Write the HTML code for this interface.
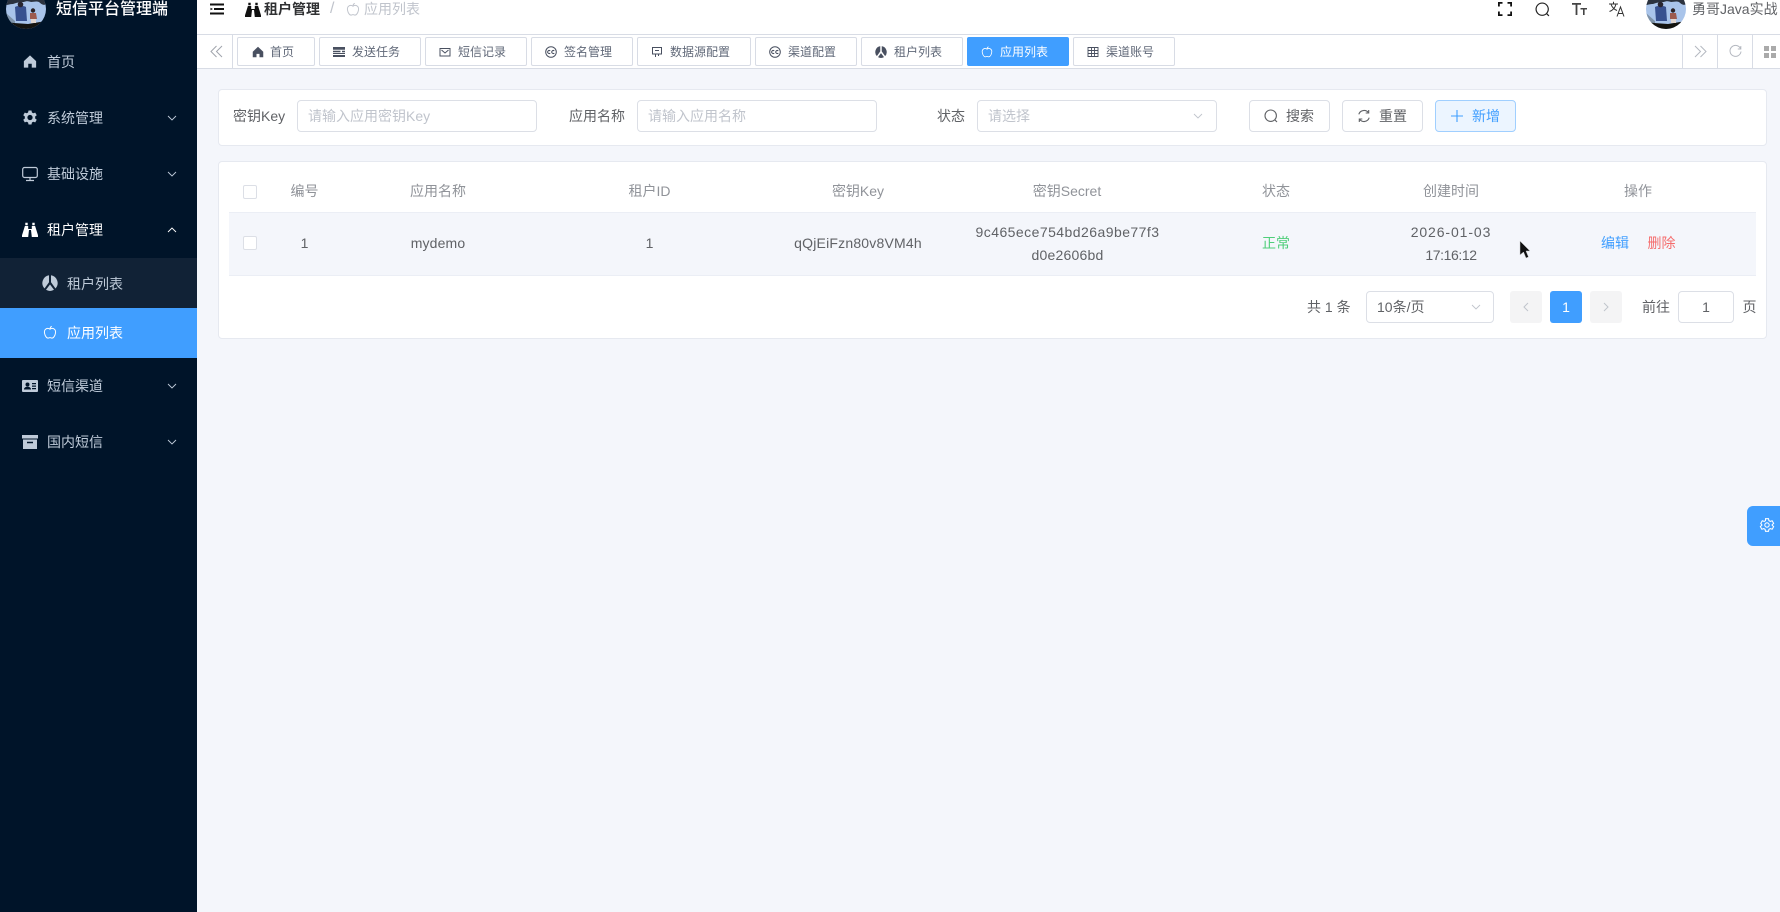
<!DOCTYPE html>
<html lang="zh-CN">
<head>
<meta charset="utf-8">
<title>短信平台管理端</title>
<style>
*{box-sizing:border-box;margin:0;padding:0}
html,body{width:1780px;height:912px;overflow:hidden;background:#f4f6fb}
body{position:relative;font-family:"Liberation Sans","Noto Sans CJK SC",sans-serif;font-size:14px;color:#606266}
.a{position:absolute}
.t{position:absolute;white-space:nowrap;line-height:20px;height:20px}
.c{transform:translateX(-50%)}
svg{display:block;overflow:visible}
svg.a{position:absolute}
#side{left:0;top:0;width:197px;height:912px;background:#001429;overflow:hidden}
#side .t{color:#bfcbd9}
.sub{left:0;width:197px;height:50px}
#top{left:197px;top:0;width:1583px;height:35px;background:#fff;border-bottom:1px solid #d8dce5}
#tabs{left:197px;top:35px;width:1583px;height:34px;background:#fff;border-bottom:1px solid #d8dce5}
.vl{position:absolute;top:35px;width:1px;height:33px;background:#d8dce5}
.tab{position:absolute;top:37px;height:29px;background:#fff;border:1px solid #d8dce5;border-radius:2px;font-size:12px;color:#606878;line-height:29px;white-space:nowrap}
.tab svg{position:absolute;left:13px;top:8px;width:12px;height:12px}
.tab span{position:absolute;left:32px;top:0}
.tab.on{background:#409eff;border-color:#409eff;color:#fff}
.card{position:absolute;background:#fff;border:1px solid #e6e9f0;border-radius:4px}
.ipt{position:absolute;top:100px;height:32px;background:#fff;border:1px solid #dcdfe6;border-radius:4px;color:#c0c4cc;line-height:30px;padding-left:10px;white-space:nowrap}
.btn{position:absolute;top:100px;height:32px;width:81px;background:#fff;border:1px solid #dcdfe6;border-radius:4px;color:#606266;line-height:30px;white-space:nowrap}
.btn svg{position:absolute;left:14px;top:8px;width:14px;height:14px}
.btn span{position:absolute;left:36px;top:0}
.btn.add{background:#ecf5ff;border-color:#a0cfff;color:#409eff}
.cb{position:absolute;left:243px;width:14px;height:14px;background:#fff;border:1px solid #dcdfe6;border-radius:2px}
.th{color:#909399}
.pg{position:absolute;top:291px;width:32px;height:32px;border-radius:3px;background:#f4f4f5;color:#c0c4cc;text-align:center;line-height:32px}
</style>
</head>
<body>
<svg width="0" height="0" style="position:absolute">
<defs>
<symbol id="home" viewBox="0 0 16 16"><path fill="currentColor" d="M8 1 1 7.600V15h5v-4.500h4V15h5V7.600z"/></symbol>
<symbol id="gear" viewBox="0 0 16 16"><path fill="currentColor" fill-rule="evenodd" d="M6.300 0h3.400l.5 2.300 1.500.9 2.300-.8 1.700 3-1.800 1.500v2.200l1.800 1.500-1.700 3-2.300-.8-1.500.9L9.700 16H6.300l-.5-2.300-1.500-.9-2.300.8-1.700-3 1.800-1.500V6.900L.3 5.400l1.700-3 2.300.8 1.500-.9zM8 5a3 3 0 1 0 0 6 3 3 0 0 0 0-6z"/></symbol>
<symbol id="mon" viewBox="0 0 16 16"><g fill="none" stroke="currentColor" stroke-width="1.200"><rect x=".7" y="1.500" width="14.600" height="10" rx="1.800"/><path d="M8 11.500v3M4 14.500h8"/></g></symbol>
<symbol id="bino" viewBox="0 0 16 16"><path fill="currentColor" d="M3.300.8h2.400v2.400H3.300zM10.300.8h2.400v2.400h-2.400zM2.900 4h3.300v3h3.600V4h3.300L16 13.300V15H9.800L9 8H7l-.8 7H0v-1.700z"/></symbol>
<symbol id="pie" viewBox="0 0 16 16"><path fill="currentColor" d="M7 .2v7L2.500 13.500A8 8 0 0 1 7 .2zM9 .2a8 8 0 0 1 4.500 13.300L9 7.200zM8 9.500l4 5.300a8 8 0 0 1-8 0z"/></symbol>
<symbol id="apple" viewBox="0 0 16 16"><path fill="none" stroke="currentColor" stroke-width="1.100" d="M8 4.200C9.500 3.200 11.300 3 12.700 4c1.500 1.100 2 3 1.500 5-.5 2.500-2 5.400-4 5.400-1 0-1.400-.5-2.200-.5s-1.200.5-2.200.5c-2 0-3.500-2.900-4-5.400-.5-2 0-3.900 1.500-5C4.700 3 6.500 3.200 8 4.200zM8 4.200C8 2.800 8.600 1.600 10 1"/></symbol>
<symbol id="card" viewBox="0 0 16 16"><path fill="currentColor" fill-rule="evenodd" d="M1 2h14a1 1 0 0 1 1 1v10a1 1 0 0 1-1 1H1a1 1 0 0 1-1-1V3a1 1 0 0 1 1-1zm4.500 2.500a2 2 0 1 0 0 4 2 2 0 0 0 0-4zM2 11.500h7c0-1.700-1.500-2.700-3.500-2.700S2 9.800 2 11.500zM10 5v1.200h4V5zm0 2.500v1.200h4V7.500zm0 2.500v1.200h4V10z"/></symbol>
<symbol id="box" viewBox="0 0 16 16"><path fill="currentColor" fill-rule="evenodd" d="M0 1h16v3.500H0zM1 5.500h14V15H1zm4 2.200v1.500h6V7.700z"/></symbol>
<symbol id="down" viewBox="0 0 12 8"><path fill="none" stroke="currentColor" stroke-width=".9" d="M2 2l4 4 4-4"/></symbol>
<symbol id="up" viewBox="0 0 12 8"><path fill="none" stroke="currentColor" stroke-width=".9" d="M2 6l4-4 4 4"/></symbol>
<symbol id="list" viewBox="0 0 12 12"><path fill="currentColor" d="M0 1h12v2.800H0zM0 4.800h7.500v1.400H0zM9 4.800h3v1.400H9zM0 7h12v1H0zM0 9h12v2H0z"/></symbol>
<symbol id="mail" viewBox="0 0 12 12"><path fill="none" stroke="currentColor" stroke-width="1" d="M1 2.500h10v7.500H1zM2.500 4 6 7l3.500-3"/></symbol>
<symbol id="cc" viewBox="0 0 12 12"><circle cx="6" cy="6" r="5.300" fill="none" stroke="currentColor"/><path fill="none" stroke="currentColor" d="M5.200 4.900a1.500 1.500 0 1 0 0 2.200M9.300 4.900a1.500 1.500 0 1 0 0 2.200"/></symbol>
<symbol id="chat" viewBox="0 0 12 12"><path fill="none" stroke="currentColor" stroke-width="1" d="M1.500 1.500h9v6.500h-9zM4.500 8v3M7.500 8v2M4 4.500h4"/></symbol>
<symbol id="tbl" viewBox="0 0 12 12"><path fill="none" stroke="currentColor" stroke-width=".9" d="M1 1.500h10v9H1zM1 4.500h10M1 7.500h10M4.500 1.500v9M7.500 1.500v9"/></symbol>
<symbol id="search" viewBox="0 0 14 14"><path fill="none" stroke="currentColor" stroke-width="1.100" d="M6.700 1a5.700 5.700 0 1 0 0 11.400A5.700 5.700 0 0 0 6.700 1zM10.800 10.800 13 13"/></symbol>
<symbol id="reset" viewBox="0 0 14 14"><path fill="none" stroke="currentColor" stroke-width="1.100" d="M1.800 5.300A5.500 5.500 0 0 1 11.500 3.800M12.200 8.700A5.500 5.500 0 0 1 2.500 10.200M11.700 1v3h-3M2.300 13v-3h3"/></symbol>
<symbol id="avatar" viewBox="0 0 40 40">
<clipPath id="cp"><circle cx="20" cy="20" r="20"/></clipPath>
<g clip-path="url(#cp)"><rect width="40" height="40" fill="#a9c4ea"/><path fill="#2c333f" d="M0 0h40v15c-2 2-5 0-7-2-3-1-5 0-8 0-3-1-5-1-7 0-5 0-8 1-11 2-3 0-5 1-7 1z"/><path fill="#7f93a8" d="M0 24l9 8v4H0z"/><path fill="#14130f" d="M0 33l8 1 14 1 18-3v8H0z"/>
<path fill="#38518f" d="M9 18c2-1.500 9-1.500 11 0l1 14H10z"/><circle cx="14.500" cy="15.500" r="2.800" fill="#2a2630"/><circle cx="27" cy="21.500" r="2.200" fill="#2a2226"/><path fill="#9c5a4e" d="M24 24h6l1 6h-7z"/><path fill="#e0d6d0" d="M25 30h5v4h-5z"/></g></symbol>
</defs>
</svg>

<!-- sidebar -->
<div id="side" class="a">
<svg class="a" style="left:6px;top:-11px" width="40" height="40"><use href="#avatar"/></svg>
<div class="t" style="left:56px;top:-1px;font-size:16px;font-weight:500;color:#fff;line-height:22px;height:22px">短信平台管理端</div>

<svg class="a" style="left:23px;top:54px;color:#bfcbd9" width="14" height="15"><use href="#home"/></svg>
<div class="t" style="left:47px;top:52px">首页</div>

<svg class="a" style="left:23px;top:110px;color:#bfcbd9" width="14" height="15"><use href="#gear"/></svg>
<div class="t" style="left:47px;top:108px">系统管理</div>
<svg class="a" style="left:166px;top:114px;color:#bfcbd9" width="12" height="8"><use href="#down"/></svg>

<svg class="a" style="left:22px;top:166px;color:#bfcbd9" width="16" height="16"><use href="#mon"/></svg>
<div class="t" style="left:47px;top:164px">基础设施</div>
<svg class="a" style="left:166px;top:170px;color:#bfcbd9" width="12" height="8"><use href="#down"/></svg>

<svg class="a" style="left:22px;top:222px;color:#fff" width="16" height="16"><use href="#bino"/></svg>
<div class="t" style="left:47px;top:220px;color:#fff">租户管理</div>
<svg class="a" style="left:166px;top:226px;color:#fff" width="12" height="8"><use href="#up"/></svg>

<div class="a sub" style="top:258px;background:#112236"></div>
<svg class="a" style="left:42px;top:275px;color:#bfcbd9" width="16" height="16"><use href="#pie"/></svg>
<div class="t" style="left:67px;top:273.500px">租户列表</div>

<div class="a sub" style="top:308px;background:#409eff"></div>
<svg class="a" style="left:43px;top:325px;color:#fff" width="14" height="15"><use href="#apple"/></svg>
<div class="t" style="left:67px;top:323px;color:#fff">应用列表</div>

<svg class="a" style="left:22px;top:378px;color:#bfcbd9" width="16" height="16"><use href="#card"/></svg>
<div class="t" style="left:47px;top:376px">短信渠道</div>
<svg class="a" style="left:166px;top:382px;color:#bfcbd9" width="12" height="8"><use href="#down"/></svg>

<svg class="a" style="left:22px;top:434px;color:#bfcbd9" width="16" height="16"><use href="#box"/></svg>
<div class="t" style="left:47px;top:432px">国内短信</div>
<svg class="a" style="left:166px;top:438px;color:#bfcbd9" width="12" height="8"><use href="#down"/></svg>
</div>

<!-- header -->
<div id="top" class="a"></div>
<svg class="a" style="left:210px;top:3px;color:#111" width="14" height="12" viewBox="0 0 14 12"><path fill="currentColor" d="M0 .5h14v2H0zM4 5h10v2H4zM.5 4.800 3 6 .5 7.200zM0 9.500h14v2H0z"/></svg>
<svg class="a" style="left:245px;top:1.500px;color:#111" width="16" height="16"><use href="#bino"/></svg>
<div class="t" style="left:264px;top:-1px;font-weight:600;color:#303133">租户管理</div>
<div class="t" style="left:330px;top:-1px;color:#c0c4cc;font-size:16px">/</div>
<svg class="a" style="left:346px;top:2px;color:#c0c4cc" width="14" height="15"><use href="#apple"/></svg>
<div class="t" style="left:364px;top:-1px;color:#c0c4cc">应用列表</div>

<svg class="a" style="left:1498px;top:2px;color:#111" width="14" height="14" viewBox="0 0 14 14"><path fill="none" stroke="currentColor" stroke-width="1.800" d="M.9 4.500V.9h3.600M9.500.9h3.600v3.600M13.100 9.500v3.600H9.500M4.500 13.100H.9V9.500"/></svg>
<svg class="a" style="left:1535px;top:2px;color:#222" width="15" height="15"><use href="#search"/></svg>
<svg class="a" style="left:1572px;top:2px;color:#444" width="15" height="14" viewBox="0 0 15 14"><path fill="currentColor" d="M0 1h9v1.800H5.400V13H3.600V2.800H0zM8.500 6H15v1.500h-2.400V13H11V7.500H8.500z"/></svg>
<svg class="a" style="left:1609px;top:1px;color:#333" width="16" height="16" viewBox="0 0 16 16"><path fill="none" stroke="currentColor" stroke-width="1" d="M0 3h9M4.500 0.800V3M7 3C6 7 3.500 9.500.5 10.500M2 3c1 3.500 3.500 5.500 6 6.500M8 15.500 11.500 6 15 15.500M9.300 12.500h4.400"/></svg>
<svg class="a" style="left:1646px;top:-11px" width="40" height="40"><use href="#avatar"/></svg>
<div class="t" style="left:1692px;top:-1px;color:#606266">勇哥Java实战</div>

<!-- tabs bar -->
<div id="tabs" class="a"></div>
<svg class="a" style="left:210px;top:45px;color:#a0a4ac" width="13" height="13" viewBox="0 0 13 13"><path fill="none" stroke="currentColor" d="M6.500 1 1 6.500 6.500 12M12 1 6.500 6.500 12 12"/></svg>
<div class="vl" style="left:232px"></div>
<div class="tab" style="left:237px;width:78px"><svg style="left:14px;color:#495060"><use href="#home"/></svg><span>首页</span></div>
<div class="tab" style="left:319px;width:102px"><svg style="color:#495060"><use href="#list"/></svg><span>发送任务</span></div>
<div class="tab" style="left:425px;width:102px"><svg style="color:#495060"><use href="#mail"/></svg><span>短信记录</span></div>
<div class="tab" style="left:531px;width:102px"><svg style="color:#495060"><use href="#cc"/></svg><span>签名管理</span></div>
<div class="tab" style="left:637px;width:114px"><svg style="color:#495060"><use href="#chat"/></svg><span>数据源配置</span></div>
<div class="tab" style="left:755px;width:102px"><svg style="color:#495060"><use href="#cc"/></svg><span>渠道配置</span></div>
<div class="tab" style="left:861px;width:102px"><svg style="color:#495060"><use href="#pie"/></svg><span>租户列表</span></div>
<div class="tab on" style="left:967px;width:102px"><svg style="color:#fff"><use href="#apple"/></svg><span>应用列表</span></div>
<div class="tab" style="left:1073px;width:102px"><svg style="color:#495060"><use href="#tbl"/></svg><span>渠道账号</span></div>
<div class="vl" style="left:1682px"></div>
<div class="vl" style="left:1717px"></div>
<div class="vl" style="left:1752px"></div>
<svg class="a" style="left:1694px;top:45px;color:#b4b8c0" width="13" height="13" viewBox="0 0 13 13"><path fill="none" stroke="currentColor" d="M1 1l5.500 5.500L1 12M6.500 1 12 6.500 6.500 12"/></svg>
<svg class="a" style="left:1729px;top:45px;color:#b4b8c0" width="13" height="13" viewBox="0 0 13 13"><path fill="none" stroke="currentColor" d="M11.500 3.500A5.500 5.500 0 1 0 12 6.500M11.800 1v3h-3"/></svg>
<svg class="a" style="left:1764px;top:46px;color:#aaa" width="12" height="12" viewBox="0 0 12 12"><path fill="currentColor" d="M0 0h5v5H0zM7 0h5v5H7zM0 7h5v5H0zM7 7h5v5H7z"/></svg>

<!-- search card -->
<div class="card" style="left:218px;top:89px;width:1549px;height:57px"></div>
<div class="t" style="left:233px;top:106px">密钥Key</div>
<div class="ipt" style="left:297px;width:240px">请输入应用密钥Key</div>
<div class="t" style="left:569px;top:106px">应用名称</div>
<div class="ipt" style="left:637px;width:240px">请输入应用名称</div>
<div class="t" style="left:937px;top:106px">状态</div>
<div class="ipt" style="left:977px;width:240px">请选择<svg class="a" style="left:214px;top:11px;color:#c0c4cc" width="12" height="8"><use href="#down"/></svg></div>
<div class="btn" style="left:1249px"><svg><use href="#search"/></svg><span>搜索</span></div>
<div class="btn" style="left:1342px"><svg><use href="#reset"/></svg><span>重置</span></div>
<div class="btn add" style="left:1435px"><svg viewBox="0 0 14 14"><path fill="none" stroke="currentColor" stroke-width="1.100" d="M7 1v12M1 7h12"/></svg><span>新增</span></div>

<!-- table card -->
<div class="card" style="left:218px;top:161px;width:1549px;height:178px"></div>
<div class="a" style="left:229px;top:212px;width:1527px;height:64px;background:#f4f6fb;border-top:1px solid #ebeef5;border-bottom:1px solid #ebeef5"></div>
<div class="cb" style="top:185px"></div>
<div class="t th c" style="left:304.500px;top:181px">编号</div>
<div class="t th c" style="left:438px;top:181px">应用名称</div>
<div class="t th c" style="left:649.500px;top:181px">租户ID</div>
<div class="t th c" style="left:858px;top:181px">密钥Key</div>
<div class="t th c" style="left:1067px;top:181px">密钥Secret</div>
<div class="t th c" style="left:1276px;top:181px">状态</div>
<div class="t th c" style="left:1451px;top:181px">创建时间</div>
<div class="t th c" style="left:1638px;top:181px">操作</div>

<div class="cb" style="top:236px"></div>
<div class="t c" style="left:304.500px;top:233px">1</div>
<div class="t c" style="left:438px;top:233px;letter-spacing:.15px">mydemo</div>
<div class="t c" style="left:649.500px;top:233px">1</div>
<div class="t c" style="left:858px;top:233px;letter-spacing:.2px">qQjEiFzn80v8VM4h</div>
<div class="t c" style="left:1067.500px;top:222px;letter-spacing:.45px">9c465ece754bd26a9be77f3</div>
<div class="t c" style="left:1067.500px;top:245px;letter-spacing:.2px">d0e2606bd</div>
<div class="t c" style="left:1276px;top:233px;color:#4fce7a">正常</div>
<div class="t c" style="left:1451px;top:222px;letter-spacing:.9px">2026-01-03</div>
<div class="t c" style="left:1451px;top:245px;letter-spacing:-.4px">17:16:12</div>
<div class="t c" style="left:1615px;top:233px;color:#409eff">编辑</div>
<div class="t c" style="left:1661.500px;top:233px;color:#f56c6c">删除</div>

<!-- pagination -->
<div class="t" style="left:1307px;top:297px">共 1 条</div>
<div class="ipt" style="left:1366px;top:291px;width:128px;color:#606266">10条/页<svg class="a" style="left:103px;top:11px;color:#c0c4cc" width="12" height="8"><use href="#down"/></svg></div>
<div class="pg" style="left:1510px"><svg class="a" style="left:12px;top:11px;color:#c0c4cc" width="8" height="10" viewBox="0 0 8 10"><path fill="none" stroke="currentColor" d="M6 1 2 5l4 4"/></svg></div>
<div class="pg" style="left:1550px;background:#409eff;color:#fff">1</div>
<div class="pg" style="left:1590px"><svg class="a" style="left:12px;top:11px;color:#c0c4cc" width="8" height="10" viewBox="0 0 8 10"><path fill="none" stroke="currentColor" d="M2 1l4 4-4 4"/></svg></div>
<div class="t" style="left:1642px;top:297px">前往</div>
<div class="ipt" style="left:1678px;top:291px;width:56px;padding:0;text-align:center;color:#606266">1</div>
<div class="t" style="left:1742.500px;top:297px">页</div>

<!-- settings float -->
<div class="a" style="left:1747px;top:506px;width:33px;height:40px;background:#409eff;border-radius:6px 0 0 6px"></div>
<svg class="a" style="left:1760px;top:518px;color:#fff" width="14" height="14" viewBox="0 0 16 16"><path fill="none" stroke="currentColor" stroke-width="1.200" d="M6.300.8h3.400l.5 2.200 1.500.9 2.200-.7 1.700 3-1.700 1.500v.6l1.700 1.500-1.700 3-2.200-.7-1.500.9-.5 2.200H6.300l-.5-2.200-1.500-.9-2.200.7-1.700-3 1.700-1.500v-.6L.9 6.200l1.700-3 2.200.7 1.500-.9z"/><circle cx="8" cy="8" r="2.500" fill="none" stroke="currentColor" stroke-width="1.200"/></svg>

<!-- cursor -->
<svg class="a" style="left:1519px;top:240px" width="12" height="20" viewBox="0 0 12 20"><path d="M1 1v14l3.500-3 2.500 6 2.500-1-2.500-6H11z" fill="#111" stroke="#ccc" stroke-width=".5"/></svg>
</body>
</html>
